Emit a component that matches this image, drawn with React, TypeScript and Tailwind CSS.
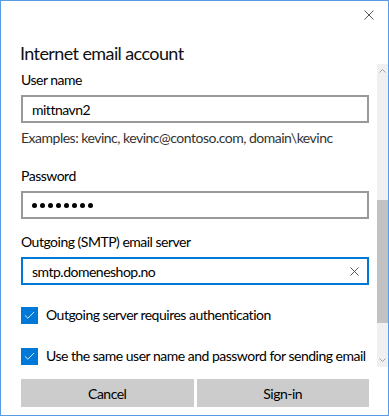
import { Check } from 'lucide-react';

function Checkbox({ label }: { label: string }) {
  return (
    <div className="flex items-center gap-[8px]">
      <div className="flex h-[17px] w-[17px] shrink-0 items-center justify-center bg-[#0078d7]">
        <Check className="h-[13px] w-[13px] text-white" strokeWidth={1.6} />
      </div>
      <span className="whitespace-nowrap text-[14px] leading-5 tracking-[-0.5px] text-black">{label}</span>
    </div>
  );
}

function Cross({ size, color }: { size: number; color: string }) {
  return (
    <svg width={size} height={size} viewBox="0 0 10 10" fill="none" stroke={color} strokeWidth={1}>
      <path d="M0.5 0.5 L9.5 9.5 M9.5 0.5 L0.5 9.5" />
    </svg>
  );
}

export default function App() {
  return (
    <div
      className="flex h-[416px] w-[389px] flex-col overflow-hidden border border-[#5b9be6] bg-white text-black"
      style={{ fontFamily: '"Segoe UI", Lato, sans-serif' }}
    >
      {/* Header */}
      <div className="flex h-[63px] shrink-0 flex-col">
        <div className="flex justify-end pr-[14px] pt-[9px]">
          <Cross size={10} color="#555" />
        </div>
        <h1 className="ml-[19px] mt-[22px] whitespace-nowrap text-[18px] leading-[22px] tracking-[-0.6px] text-[#111]">
          Internet email account
        </h1>
      </div>

      {/* Scrolling body */}
      <div className="flex h-[303px] shrink-0">
        <div className="min-w-0 flex-1 pl-[20px] pr-[8px] text-[14px] tracking-[-0.5px]">
          <p className="mt-[6px] leading-5">User name</p>
          <div className="mt-[5px] flex h-[28px] items-center border-2 border-[#999] px-[9px]">mittnavn2</div>
          <p className="mt-[5px] whitespace-nowrap leading-5 text-[#333]">
            Examples: kevinc, kevinc@contoso.com, domain\kevinc
          </p>

          <p className="mt-[18px] leading-5">Password</p>
          <div className="mt-[5px] flex h-[28px] items-center gap-[3px] border-2 border-[#999] px-[9px]">
            {Array.from({ length: 8 }).map((_, i) => (
              <span key={i} className="h-[5px] w-[5px] rounded-full bg-black" />
            ))}
          </div>

          <p className="mt-[13px] leading-5">Outgoing (SMTP) email server</p>
          <div className="mt-[5px] flex h-[28px] items-center justify-between border-2 border-[#0078d7] pl-[9px] pr-[8px]">
            <span>smtp.domeneshop.no</span>
            <Cross size={9} color="#444" />
          </div>

          <div className="mt-[20px]">
            <Checkbox label="Outgoing server requires authentication" />
          </div>
          <div className="mt-[21px]">
            <Checkbox label="Use the same user name and password for sending email" />
          </div>
        </div>

        {/* Scrollbar */}
        <div className="flex w-[11px] shrink-0 flex-col items-center bg-[#f0f0f0]">
          <div className="flex h-[14px] items-center justify-center text-[#a0a0a0]">
            <svg width="7" height="4" viewBox="0 0 7 4" fill="none" stroke="currentColor">
              <path d="M0.5 3.5 L3.5 0.5 L6.5 3.5" />
            </svg>
          </div>
          <div className="mt-[122px] h-[123px] w-full bg-[#c2c2c2]" />
          <div className="mt-auto flex h-[14px] items-center justify-center text-[#a0a0a0]">
            <svg width="7" height="4" viewBox="0 0 7 4" fill="none" stroke="currentColor">
              <path d="M0.5 0.5 L3.5 3.5 L6.5 0.5" />
            </svg>
          </div>
        </div>
      </div>

      {/* Footer */}
      <div className="flex gap-[3px] pl-[20px] pr-[19px] pt-[12px]">
        <button className="h-[28px] flex-1 bg-[#cccccc] text-[14px] tracking-[-0.5px]">Cancel</button>
        <button className="h-[28px] flex-1 bg-[#cccccc] text-[14px] tracking-[-0.5px]">Sign-in</button>
      </div>
    </div>
  );
}
